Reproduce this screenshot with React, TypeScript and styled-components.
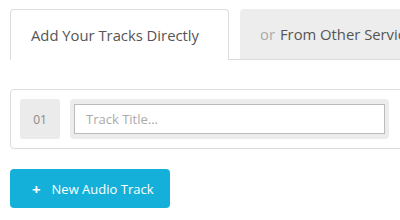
import styled, { createGlobalStyle } from 'styled-components';

const GlobalStyle = createGlobalStyle`
  body {
    margin: 0;
    background: #ffffff;
    font-family: "Open Sans", "Liberation Sans", sans-serif;
  }
`;

const Page = styled.div`
  width: 400px;
  height: 220px;
  overflow: hidden;
  padding: 9px 0 0 10px;
  box-sizing: border-box;
`;

const TabBar = styled.div`
  display: flex;
  align-items: flex-end;
  gap: 11px;
  width: 460px;
  border-bottom: 1px solid #dcdcdc;
`;

type TabProps = {
  active?: boolean;
};

const Tab = styled.div<TabProps>`
  box-sizing: border-box;
  height: ${props => (props.active ? '51px' : '50px')};
  width: ${props => (props.active ? '219px' : '230px')};
  margin-bottom: ${props => (props.active ? '-1px' : '0')};
  padding: 0 0 1px 20px;
  display: flex;
  align-items: center;
  font-size: 14.8px;
  color: #555555;
  background: ${props => (props.active ? '#ffffff' : '#ededed')};
  border: ${props => (props.active ? '1px solid #dcdcdc' : 'none')};
  border-bottom: none;
  border-radius: 4px 4px 0 0;
  white-space: nowrap;
`;

const Muted = styled.span`
  color: #aaaaaa;
  margin-right: 5px;
`;

const TrackRow = styled.div`
  box-sizing: border-box;
  margin-top: 29px;
  width: 460px;
  height: 60px;
  padding: 9px;
  display: flex;
  gap: 10px;
  border: 1px solid #dcdcdc;
  border-radius: 4px;
`;

const Number = styled.div`
  width: 40px;
  height: 40px;
  display: flex;
  align-items: center;
  justify-content: center;
  background: #ebebeb;
  border-radius: 3px;
  font-size: 12px;
  color: #888888;
`;

const InputWrap = styled.div`
  box-sizing: border-box;
  width: 319px;
  height: 40px;
  padding: 5px 4px;
  background: #ececec;
  border-radius: 4px;
`;

const TitleInput = styled.input`
  box-sizing: border-box;
  width: 100%;
  height: 30px;
  margin: 0;
  padding: 0 11px;
  border: 1px solid #bbbbbb;
  background: #ffffff;
  font-family: inherit;
  font-size: 13px;
  color: #555555;
  outline: none;
  &::placeholder {
    color: #aaaaaa;
  }
`;

const AddButton = styled.button`
  margin-top: 20px;
  width: 160px;
  height: 39px;
  padding: 0 0 0 22px;
  display: flex;
  align-items: center;
  gap: 11px;
  border: none;
  border-radius: 4px;
  background: #14b0d9;
  color: #ffffff;
  font-family: inherit;
  font-size: 13px;
  cursor: pointer;
`;

const Plus = styled.span`
  font-size: 15px;
  font-weight: bold;
`;

function App() {
  return (
    <>
      <GlobalStyle />
      <Page>
        <TabBar>
          <Tab active>Add Your Tracks Directly</Tab>
          <Tab>
            <Muted>or</Muted>From Other Services
          </Tab>
        </TabBar>
        <TrackRow>
          <Number>01</Number>
          <InputWrap>
            <TitleInput placeholder="Track Title..." />
          </InputWrap>
        </TrackRow>
        <AddButton>
          <Plus>+</Plus>
          New Audio Track
        </AddButton>
      </Page>
    </>
  );
}

export default App;
